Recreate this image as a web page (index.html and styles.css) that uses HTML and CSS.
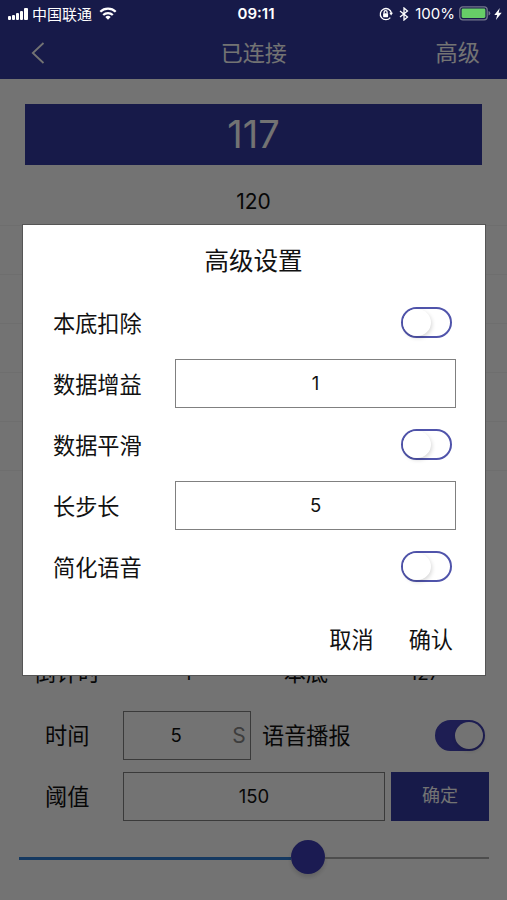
FILE: index.html
```html
<!DOCTYPE html>
<html lang="zh-CN">
<head>
  <meta charset="UTF-8">
  <title>高级设置</title>
  <meta name="viewport" content="width=device-width, initial-scale=1.0">
  <link rel="stylesheet" href="styles.css">
</head>
<body>

  <div class="screen">
    <header>
      <svg class="back" width="14" height="22" viewBox="0 0 14 22"><path d="M12.5 1L1.8 11l10.7 10"/></svg>
      <h1>已连接</h1>
      <span class="advanced">高级</span>
    </header>

    <main>
      <div class="current">117</div>

      <div class="history">
        <div class="history-row">120</div>
        <div class="history-row"></div>
        <div class="history-row"></div>
        <div class="history-row"></div>
        <div class="history-row"></div>
        <div class="history-row"></div>
      </div>

      <div class="info">
        <span>倒计时</span>
        <span class="num">1</span>
        <span>本底</span>
        <span class="num">127</span>
      </div>

      <div class="row">
        <span class="row-label">时间</span>
        <div class="box time"><span class="value">5</span><span class="unit">S</span></div>
        <span class="voice">语音播报</span>
        <span class="switch on"></span>
      </div>

      <div class="row">
        <span class="row-label">阈值</span>
        <div class="box limit">150</div>
        <div class="btn">确定</div>
      </div>

      <div class="slider">
        <div class="slider-fill"></div>
        <div class="slider-thumb"></div>
        <div class="slider-rest"></div>
      </div>
    </main>

    <div class="overlay">
      <div class="dialog">
        <h2>高级设置</h2>
        <div class="field"><label>本底扣除</label><span class="switch"></span></div>
        <div class="field"><label>数据增益</label><div class="box">1</div></div>
        <div class="field"><label>数据平滑</label><span class="switch"></span></div>
        <div class="field"><label>长步长</label><div class="box">5</div></div>
        <div class="field"><label>简化语音</label><span class="switch"></span></div>
        <div class="actions"><span>取消</span><span>确认</span></div>
      </div>
    </div>

    <div class="status">
      <div class="status-left">
        <svg width="20" height="12" viewBox="0 0 20 12">
          <rect x="0" y="8" width="3" height="4" rx="1"/>
          <rect x="4" y="7" width="3" height="5" rx="1"/>
          <rect x="8" y="5" width="3" height="7" rx="1"/>
          <rect x="12" y="3" width="3" height="9" rx="1"/>
          <rect x="16" y="0" width="4" height="12" rx="1"/>
        </svg>
        <span class="carrier">中国联通</span>
        <svg width="18" height="13" viewBox="0 0 18 13">
          <g class="wifi">
            <path d="M1.3 4.8a11 11 0 0 1 15.4 0"/>
            <path d="M4.2 8a7 7 0 0 1 9.6 0"/>
          </g>
          <path d="M9 12.8L6.3 10a4 4 0 0 1 5.4 0z"/>
        </svg>
      </div>
      <span class="clock">09:11</span>
      <div class="status-right">
        <svg class="lock" width="14" height="14" viewBox="0 0 14 14">
          <path class="line" d="M11.3 10.6A5.6 5.6 0 1 1 12.4 6"/>
          <path d="M10.3 5.7h3.7l-1.9 2.7z"/>
          <rect x="4.1" y="6.2" width="5" height="4" rx=".6"/>
          <path class="line" d="M5.1 6.5V5.2a1.5 1.5 0 0 1 3 0v1.3"/>
        </svg>
        <svg class="bluetooth" width="10" height="14" viewBox="0 0 10 14">
          <path class="line" d="M1 4l7.5 6L5 13V1l3.5 3L1 10"/>
        </svg>
        <span class="percent">100%</span>
        <svg class="battery" width="32" height="15" viewBox="0 0 32 15">
          <rect class="case" x=".8" y=".8" width="27.4" height="13" rx="3"/>
          <rect class="charge" x="2.6" y="2.6" width="23.8" height="9.4" rx="1.4"/>
          <path class="tip" d="M29.5 5q1.8.5 1.8 2.3t-1.8 2.3z"/>
        </svg>
        <svg width="8" height="12" viewBox="0 0 8 12"><path d="M5.8 0L.3 7h2.9L1.9 12 7.7 4.8H4.6z"/></svg>
      </div>
    </div>
  </div>

</body>
</html>
```
FILE: styles.css
```css
:root {
  --navy: #333aa2;
  --font: Inter, "Noto Sans CJK SC", sans-serif;
}

* {
  box-sizing: border-box;
}

body {
  margin: 0;
  font-family: var(--font);
  font-size: 22.2px;
  color: #111;
}

.screen {
  position: relative;
  height: 900px;
  overflow: hidden;
  background-color: #fff;
}

header {
  display: flex;
  align-items: center;
  justify-content: space-between;
  height: 79px;
  padding: 26px 27px 0 31px;
  background-color: var(--navy);
  color: #fff;
}

header h1 {
  margin: 0 0 4px 27px;
  font-size: 22px;
  font-weight: 400;
}

.back {
  fill: none;
  stroke: #fff;
  stroke-width: 1.8;
}

.advanced {
  margin-bottom: 4px;
}

main {
  padding-top: 25px;
}

.current {
  height: 61px;
  margin: 0 25px;
  background-color: var(--navy);
  color: #fff;
  font-size: 38px;
  font-weight: 400;
  line-height: 61px;
  text-align: center;
}

.history {
  margin-top: 12px;
}

.history-row {
  height: 49px;
  border-bottom: 1px solid #f3f3f3;
  font-size: 21px;
  line-height: 49px;
  text-align: center;
}

.info {
  display: grid;
  grid-template-columns: 134px 107px 130px 107px;
  height: 40px;
  margin-top: 182px;
  line-height: 40px;
  text-align: center;
}

.info .num {
  padding-top: 1px;
  font-size: 19px;
}

.row {
  display: flex;
  align-items: center;
  height: 49px;
  margin-bottom: 12px;
  padding-left: 45px;
}

.info + .row {
  margin-top: 18px;
}

.row-label {
  width: 78px;
  margin-bottom: 4px;
}

.box {
  height: 49px;
  border: 1px solid #808080;
  font-size: 18.5px;
  line-height: 47px;
  text-align: center;
}

.time {
  display: flex;
  width: 128px;
}

.value {
  flex: 1;
}

.unit {
  width: 22px;
  color: #888;
  font-size: 21px;
}

.voice {
  width: 173px;
  margin: 0 0 4px 11px;
}

.limit {
  width: 262px;
}

.btn {
  width: 98px;
  height: 49px;
  margin-left: 6px;
  background-color: var(--navy);
  color: #fff;
  font-size: 18px;
  line-height: 47px;
  text-align: center;
}

.switch {
  display: flex;
  width: 51px;
  height: 31px;
  border: 2px solid #5054ab;
  border-radius: 16px;
  background-color: #fff;
}

.switch::before {
  content: "";
  width: 28px;
  height: 27px;
  border-radius: 50%;
  background-color: #fff;
  box-shadow: 1px 2px 4px rgba(0, 0, 0, 0.16);
}

.switch.on {
  justify-content: flex-end;
  width: 50px;
  border-color: #4343b8;
  background-color: #4343b8;
}

.slider {
  display: flex;
  align-items: center;
  height: 34px;
  margin: 19px 18px 0 19px;
}

.slider-fill {
  width: 272px;
  height: 3px;
  margin-top: 2px;
  background-color: #307fd8;
}

.slider-thumb {
  width: 34px;
  height: 34px;
  border-radius: 50%;
  background-color: #3c3cb6;
  box-shadow: 0 3px 4px rgba(0, 0, 0, 0.15);
}

.slider-rest {
  flex: 1;
  height: 2px;
  margin-top: 2px;
  background-color: #aaa;
}

.overlay {
  position: absolute;
  inset: 0;
  display: flex;
  align-items: center;
  justify-content: center;
  background-color: rgba(0, 0, 0, 0.55);
}

.dialog {
  width: 464px;
  height: 452px;
  margin: 0 0 0 1px;
  padding: 0 29px 0 30px;
  border: 1px solid #555;
  background-color: #fff;
}

.dialog h2 {
  margin: 0 2px 0 0;
  height: 67px;
  font-size: 24.5px;
  font-weight: 400;
  line-height: 73px;
  text-align: center;
}

.field {
  display: flex;
  align-items: center;
  height: 61px;
}

.field label {
  width: 122px;
  margin-bottom: 2px;
}

.field .box {
  width: 281px;
}

.field .switch {
  margin-left: auto;
  margin-right: 4px;
}

.actions {
  display: flex;
  justify-content: flex-end;
  gap: 35px;
  padding: 25px 3px 0 0;
}

.status {
  position: absolute;
  top: 0;
  left: 0;
  right: 0;
  display: flex;
  align-items: center;
  justify-content: space-between;
  height: 27px;
  padding: 0 5px 0 8px;
  color: #fff;
  font-size: 15px;
}

.status svg {
  fill: #fff;
}

.status-left,
.status-right {
  display: flex;
  align-items: center;
  flex: 1;
}

.status-left {
  gap: 4px;
}

.status-left .carrier {
  margin: 0 3px 1px 0;
}

.status-right {
  justify-content: flex-end;
}

.clock {
  margin-left: 2px;
  font-weight: 600;
}

.status .line {
  fill: none;
  stroke: #fff;
  stroke-width: 1.3;
}

.status .wifi {
  fill: none;
  stroke: #fff;
  stroke-width: 2.3;
}

.lock {
  margin-right: 6px;
}

.bluetooth {
  margin-right: 6px;
}

.battery {
  margin: 0 3px 0 4px;
}

.status .case {
  fill: none;
  stroke: #74768d;
  stroke-width: 1.3;
}

.status .charge {
  fill: #67ce67;
}

.status .tip {
  fill: #74768d;
}
```
